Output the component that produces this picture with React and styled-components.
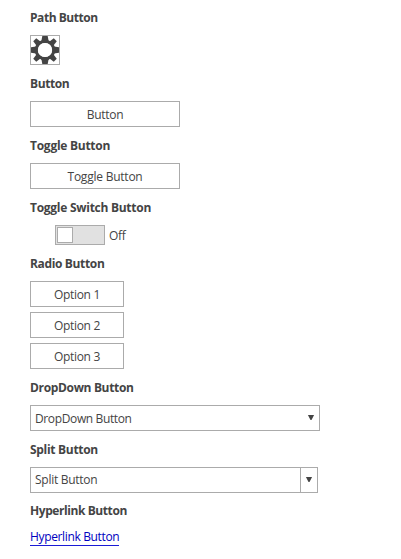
import React from "react";
import styled, { createGlobalStyle } from "styled-components";

const GlobalStyle = createGlobalStyle`
  *, *::before, *::after { box-sizing: border-box; }
  body {
    margin: 0;
    background: #fff;
    color: #444;
    font: 12px/16px "Open Sans", "Noto Sans", sans-serif;
  }
  button { font: inherit; color: inherit; }
`;

const Page = styled.main`
  display: flex;
  flex-direction: column;
  gap: 11px;
  width: 401px;
  height: 559px;
  padding: 10px 30px 0;
  overflow: hidden;
`;

const Section = styled.section`
  display: flex;
  flex-direction: column;
  align-items: flex-start;
  margin-top: ${(p) => p.$shift || 0}px;
`;

const Heading = styled.h2`
  height: 16px;
  margin: 0 0 9px;
  font-size: 12px;
  font-weight: 700;
  white-space: nowrap;
  letter-spacing: ${(p) => p.$track ?? -0.3}px;
`;

const Label = styled.span`
  white-space: nowrap;
  letter-spacing: ${(p) => p.$track ?? -0.3}px;
`;

const BoxButton = styled.button`
  display: flex;
  align-items: center;
  justify-content: center;
  width: ${(p) => p.$width}px;
  height: 26px;
  padding: 2px 0 0;
  border: 1px solid #ababab;
  background: #fff;
`;

const IconButton = styled(BoxButton)`
  height: 30px;
  padding: 0;
`;

const SwitchRow = styled.div`
  display: flex;
  align-items: center;
  gap: 4px;
  height: 20px;
  margin-left: 25px;
`;

const Track = styled.div`
  width: 50px;
  height: 20px;
  padding: 1px;
  border: 1px solid #ababab;
  background: #e1e1e1;
`;

const Knob = styled.div`
  width: 16px;
  height: 16px;
  border: 1px solid #ababab;
  background: #fff;
`;

const SwitchLabel = styled(Label)`
  padding-top: 2px;
`;

const RadioList = styled.div`
  display: flex;
  flex-direction: column;
  gap: 5px;
`;

const DropButton = styled(BoxButton)`
  justify-content: space-between;
  padding: 2px 4px 0 4px;
`;

const SplitGroup = styled.div`
  display: flex;
  width: 288px;
  height: 26px;
  border: 1px solid #ababab;
`;

const SplitMain = styled.button`
  flex: 1;
  padding: 0 4px;
  border: 0;
  background: #fff;
  text-align: left;
`;

const SplitArrow = styled.button`
  display: flex;
  align-items: center;
  justify-content: center;
  width: 17px;
  padding: 0;
  border: 0;
  border-left: 1px solid #ababab;
  background: #fff;
`;

const Link = styled.a`
  height: 18px;
  padding-top: 1px;
  border-bottom: 1px solid #1a1ad6;
  color: #0000c0;
  white-space: nowrap;
  text-decoration: none;
  letter-spacing: -0.35px;
`;

const ArrowIcon = styled.svg`
  display: block;
  flex: none;
  margin-top: ${(p) => p.$top || 0}px;
`;

function Arrow({ top }) {
  return (
    <ArrowIcon $top={top} width="8" height="5" viewBox="0 0 8 5">
      <path d="M0.9 0H7.1L4.5 5H3.5Z" fill="#444" />
    </ArrowIcon>
  );
}

function Gear() {
  const teeth = [0, 45, 90, 135, 180, 225, 270, 315];
  return (
    <svg width="28" height="28" viewBox="-14 -14 28 28">
      <g fill="#444">
        {teeth.map((a) => (
          <path
            key={a}
            transform={`rotate(${a})`}
            d={a % 90 ? "M-3 -8L-2.1 -14.5H2.1L3 -8Z" : "M-3.6 -9L-2.7 -14H2.7L3.6 -9Z"}
          />
        ))}
      </g>
      <circle r="8.7" fill="none" stroke="#444" strokeWidth="3.2" />
      <circle r="7.1" fill="#fff" />
    </svg>
  );
}

const options = ["Option 1", "Option 2", "Option 3"];

export default function App() {
  return (
    <>
      <GlobalStyle />
      <Page>
        <Section>
          <Heading $track={-0.45}>Path Button</Heading>
          <IconButton $width={30} aria-label="Settings"><Gear /></IconButton>
        </Section>
        <Section>
          <Heading $track={-0.4}>Button</Heading>
          <BoxButton $width={150}><Label>Button</Label></BoxButton>
        </Section>
        <Section>
          <Heading $track={-0.26}>Toggle Button</Heading>
          <BoxButton $width={150}><Label $track={-0.23}>Toggle Button</Label></BoxButton>
        </Section>
        <Section>
          <Heading $track={-0.27}>Toggle Switch Button</Heading>
          <SwitchRow>
            <Track><Knob /></Track>
            <SwitchLabel>Off</SwitchLabel>
          </SwitchRow>
        </Section>
        <Section>
          <Heading $track={-0.35}>Radio Button</Heading>
          <RadioList>
            {options.map((o) => (
              <BoxButton key={o} $width={94}><Label>{o}</Label></BoxButton>
            ))}
          </RadioList>
        </Section>
        <Section>
          <Heading $track={-0.34}>DropDown Button</Heading>
          <DropButton $width={290}>
            <Label $track={-0.37}>DropDown Button</Label>
            <Arrow top={-3} />
          </DropButton>
        </Section>
        <Section>
          <Heading>Split Button</Heading>
          <SplitGroup>
            <SplitMain><Label $track={-0.27}>Split Button</Label></SplitMain>
            <SplitArrow aria-label="Open"><Arrow top={-1} /></SplitArrow>
          </SplitGroup>
        </Section>
        <Section $shift={-1}>
          <Heading $track={-0.42}>Hyperlink Button</Heading>
          <Link>Hyperlink Button</Link>
        </Section>
      </Page>
    </>
  );
}
